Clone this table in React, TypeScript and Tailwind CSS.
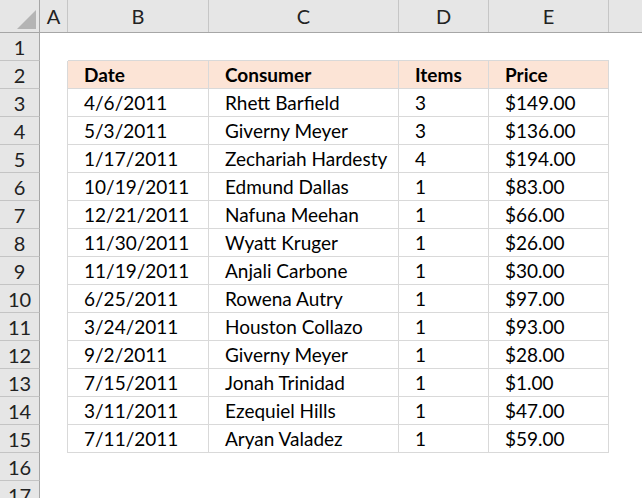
import React from "react";

const rows: [string, string, string, string][] = [
  ["4/6/2011", "Rhett Barfield", "3", "$149.00"],
  ["5/3/2011", "Giverny Meyer", "3", "$136.00"],
  ["1/17/2011", "Zechariah Hardesty", "4", "$194.00"],
  ["10/19/2011", "Edmund Dallas", "1", "$83.00"],
  ["12/21/2011", "Nafuna Meehan", "1", "$66.00"],
  ["11/30/2011", "Wyatt Kruger", "1", "$26.00"],
  ["11/19/2011", "Anjali Carbone", "1", "$30.00"],
  ["6/25/2011", "Rowena Autry", "1", "$97.00"],
  ["3/24/2011", "Houston Collazo", "1", "$93.00"],
  ["9/2/2011", "Giverny Meyer", "1", "$28.00"],
  ["7/15/2011", "Jonah Trinidad", "1", "$1.00"],
  ["3/11/2011", "Ezequiel Hills", "1", "$47.00"],
  ["7/11/2011", "Aryan Valadez", "1", "$59.00"],
];

const widths = ["w-[141px]", "w-[190px]", "w-[90px]", "w-[120px]"];

function RowHead({ n }: { n: number }) {
  return (
    <div className="w-[40px] h-full shrink-0 bg-[#e6e6e6] border-r border-b border-r-[#a6a6a6] border-b-[#c4c4c4] flex items-center justify-center text-[20px] text-[#222]">
      {n}
    </div>
  );
}

function Cell({ w, text, bold, fill }: { w: string; text: string; bold?: boolean; fill?: boolean }) {
  return (
    <div
      className={`${w} h-full shrink-0 border-r border-b border-[#d9d9d9] flex items-center pl-[16px] pt-[1px] ${
        bold ? "font-bold" : ""
      } ${fill ? "bg-[#fce4d6]" : ""}`}
    >
      {text}
    </div>
  );
}

export default function App() {
  return (
    <div
      className="w-[642px] h-[498px] overflow-hidden bg-white text-[19px] text-black"
      style={{ fontFamily: "Lato, 'Liberation Sans', sans-serif" }}
    >
      {/* column headers */}
      <div className="flex h-[33px] bg-[#e6e6e6] border-b border-[#a6a6a6] text-[20px] text-[#222]">
        <div className="w-[40px] shrink-0 border-r border-[#a6a6a6] relative">
          <svg className="absolute left-0 top-0" width="40" height="32" viewBox="0 0 40 32">
            <polygon points="36,10 36,29 17,29" fill="#b4b4b4" />
          </svg>
        </div>
        <div className="w-[28px] shrink-0 border-r border-[#c6c6c6] flex items-center justify-center">A</div>
        {["B", "C", "D", "E"].map((c, i) => (
          <div key={c} className={`${widths[i]} shrink-0 border-r border-[#c6c6c6] flex items-center justify-center`}>
            {c}
          </div>
        ))}
        <div className="flex-1" />
      </div>

      {/* row 1 */}
      <div className="flex h-[28px]">
        <RowHead n={1} />
        <div className="w-[28px] shrink-0" />
        {widths.map((w) => (
          <div key={w} className={`${w} h-full shrink-0 border-b border-[#d9d9d9]`} />
        ))}
      </div>

      {/* row 2: table header */}
      <div className="flex h-[28px]">
        <RowHead n={2} />
        <div className="w-[28px] shrink-0 border-r border-[#d9d9d9]" />
        {["Date", "Consumer", "Items", "Price"].map((t, i) => (
          <Cell key={t} w={widths[i]} text={t} bold fill />
        ))}
      </div>

      {rows.map((r, idx) => (
        <div key={idx} className="flex h-[28px]">
          <RowHead n={idx + 3} />
          <div className="w-[28px] shrink-0 border-r border-[#d9d9d9]" />
          {r.map((t, i) => (
            <Cell key={i} w={widths[i]} text={t} />
          ))}
        </div>
      ))}

      {[16, 17].map((n) => (
        <div key={n} className="flex h-[28px]">
          <RowHead n={n} />
        </div>
      ))}
    </div>
  );
}
